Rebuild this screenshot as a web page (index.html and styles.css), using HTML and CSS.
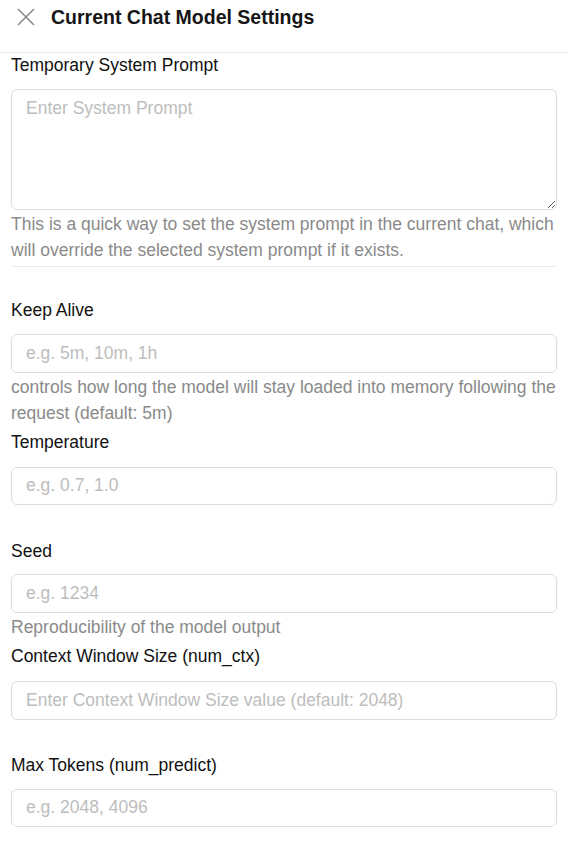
FILE: index.html
```html
<!DOCTYPE html>
<html>
<head>
<meta charset="utf-8">
<link rel="stylesheet" href="styles.css">
</head>
<body>
<div class="panel">
  <div class="header">
    <span class="close">
      <svg width="18" height="18" viewBox="0 0 18 18"><path d="M1 1 L17 17 M17 1 L1 17" stroke="#8a8a8a" stroke-width="1.6" fill="none"/></svg>
    </span>
    <h1 class="title">Current Chat Model Settings</h1>
  </div>
  <div class="body">
    <div class="label label-first">Temporary System Prompt</div>
    <div class="textarea-wrap">
      <textarea class="textarea" placeholder="Enter System Prompt"></textarea>
    </div>
    <div class="help">This is a quick way to set the system prompt in the current chat, which will override the selected system prompt if it exists.</div>
    <div class="divider"></div>

    <div class="label l-keep">Keep Alive</div>
    <input class="input i-keep" placeholder="e.g. 5m, 10m, 1h">
    <div class="help">controls how long the model will stay loaded into memory following the request (default: 5m)</div>

    <div class="label l-temp">Temperature</div>
    <input class="input i-temp" placeholder="e.g. 0.7, 1.0">

    <div class="label l-seed">Seed</div>
    <input class="input" placeholder="e.g. 1234">
    <div class="help">Reproducibility of the model output</div>

    <div class="label l-ctx">Context Window Size (num_ctx)</div>
    <input class="input i-ctx" placeholder="Enter Context Window Size value (default: 2048)">

    <div class="label l-max">Max Tokens (num_predict)</div>
    <input class="input i-max" placeholder="e.g. 2048, 4096">
  </div>
</div>
</body>
</html>
```

FILE: styles.css
```css
* { box-sizing: border-box; }
html, body {
  margin: 0;
  padding: 0;
  background: #fff;
  font-family: "Liberation Sans", Arial, sans-serif;
  color: #111;
  overflow: hidden;
}
.panel {
  width: 568px;
  display: flex;
  flex-direction: column;
}
.header {
  height: 53px;
  border-bottom: 1px solid #ececec;
  display: flex;
  align-items: flex-start;
  padding: 8px 0 0 17px;
}
.close {
  width: 18px;
  height: 18px;
  display: flex;
}
.title {
  margin: -1px 0 0 16px;
  font-size: 19.5px;
  line-height: 20px;
  font-weight: bold;
  color: #161616;
}
.body {
  display: flex;
  flex-direction: column;
  padding: 0 11px;
}
.label {
  font-size: 17.5px;
  line-height: 24px;
  color: #111;
}
.textarea-wrap {
  margin-top: 12px;
  display: flex;
}
.textarea {
  width: 100%;
  height: 121px;
  border: 1px solid #dcdcdc;
  border-radius: 6px;
  padding: 6px 14px;
  font-family: "Liberation Sans", Arial, sans-serif;
  font-size: 17.5px;
  line-height: 24px;
  color: #111;
  resize: vertical;
  outline: none;
  margin: 0;
  display: block;
}
.textarea::placeholder, .input::placeholder {
  color: #bdbdbd;
}
.help {
  margin-top: 1px;
  margin-right: -6px;
  font-size: 17.5px;
  line-height: 26.4px;
  color: #8a8a8a;
}
.divider {
  margin-top: 2px;
  height: 1px;
  background: #ececec;
}
.input {
  display: block;
  width: 100%;
  height: 38.5px;
  margin-top: 11px;
  border: 1px solid #dcdcdc;
  border-radius: 6px;
  padding: 0 14px;
  font-family: "Liberation Sans", Arial, sans-serif;
  font-size: 17.5px;
  color: #111;
  outline: none;
}
.l-keep { margin-top: 31px; }
.i-keep { margin-top: 12px; height: 39px; }
.l-temp { margin-top: 3px; }
.i-temp { margin-top: 13px; }
.l-seed { margin-top: 34px; }
.l-ctx { margin-top: 4px; }
.i-ctx { margin-top: 13px; }
.l-max { margin-top: 33px; }
.i-max { margin-top: 12px; }
```
